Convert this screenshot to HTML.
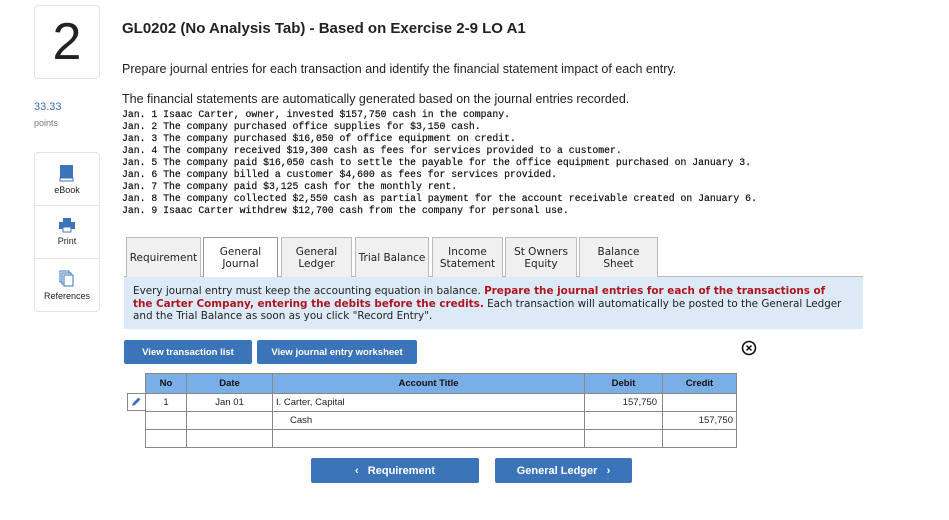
<!DOCTYPE html>
<html><head><meta charset="utf-8"><style>
*{box-sizing:border-box;margin:0;padding:0}
body{width:949px;height:520px;background:#fff;position:relative;font-family:"Liberation Sans",sans-serif;color:#222;overflow:hidden}
.a{position:absolute}
.num{left:34px;top:5px;width:66px;height:74px;border:1px solid #e3e3e3;border-radius:4px;text-align:center;font-size:52px;line-height:72px;color:#222}
.mono{font-family:"Liberation Mono",monospace;font-size:9.8px;line-height:12px;white-space:pre;color:#111;left:122px;top:109px;-webkit-text-stroke:0.2px #111}
.side{left:34px;top:152px;width:66px;height:160px;border:1px solid #e3e3e3;border-radius:4px}
.side div{height:53px;border-bottom:1px solid #e3e3e3;text-align:center;font-size:9px;padding-top:11px;position:relative}
.side div:last-child{border-bottom:none}
.tab{top:237px;height:40px;border:1px solid #bbb;border-bottom:none;background:#f0f0f0;font-family:"DejaVu Sans",sans-serif;font-size:10.5px;text-align:center;display:flex;align-items:center;justify-content:center;line-height:12px;color:#222}
.info{left:124px;top:277px;width:739px;height:52px;background:#dceaf7;font-family:"DejaVu Sans",sans-serif;font-size:10.4px;line-height:12.5px;padding:8px 6px 8px 9px}
.btn{background:#3b74b8;color:#fff;font-weight:bold;font-size:10.5px;display:flex;align-items:center;justify-content:center;border-radius:2px}
table{border-collapse:collapse;font-size:9.5px;position:absolute;left:145px;top:373px}
td,th{border:1px solid #888;height:18px}
th{background:#7aaee6;height:20px;font-weight:bold;color:#111}
</style></head><body>
<div class="a num">2</div>
<div class="a" style="left:122px;top:20px;font-size:15px;font-weight:bold">GL0202 (No Analysis Tab) - Based on Exercise 2-9 LO A1</div>
<div class="a" style="left:122px;top:62px;font-size:12.5px">Prepare journal entries for each transaction and identify the financial statement impact of each entry.</div>
<div class="a" style="left:122px;top:92px;font-size:12.5px">The financial statements are automatically generated based on the journal entries recorded.</div>
<div class="a mono">Jan. 1 Isaac Carter, owner, invested $157,750 cash in the company.
Jan. 2 The company purchased office supplies for $3,150 cash.
Jan. 3 The company purchased $16,050 of office equipment on credit.
Jan. 4 The company received $19,300 cash as fees for services provided to a customer.
Jan. 5 The company paid $16,050 cash to settle the payable for the office equipment purchased on January 3.
Jan. 6 The company billed a customer $4,600 as fees for services provided.
Jan. 7 The company paid $3,125 cash for the monthly rent.
Jan. 8 The company collected $2,550 cash as partial payment for the account receivable created on January 6.
Jan. 9 Isaac Carter withdrew $12,700 cash from the company for personal use.</div>
<div class="a" style="left:34px;top:101px;font-size:11px;color:#3b6fb0">33.33</div>
<div class="a" style="left:34px;top:118px;font-size:9px;color:#777">points</div>
<div class="a side">
<div><svg width="16" height="18" style="display:block;margin:0 auto 3px"><rect x="1" y="1" width="13" height="14" fill="#3b74b8"/><rect x="1" y="14" width="13" height="3" fill="#fff" stroke="#3b74b8"/></svg>eBook</div>
<div><svg width="18" height="16" style="display:block;margin:0 auto 3px"><rect x="5" y="1" width="8" height="4" fill="#3b74b8"/><rect x="1" y="5" width="16" height="7" fill="#3b74b8"/><rect x="5" y="10" width="8" height="5" fill="#fff" stroke="#3b74b8"/></svg>Print</div>
<div><svg width="16" height="18" style="display:block;margin:0 auto 3px"><rect x="1" y="1" width="9" height="11" fill="#fff" stroke="#3b74b8"/><rect x="3" y="3" width="9" height="11" fill="#fff" stroke="#3b74b8"/><rect x="5" y="5" width="9" height="11" fill="#fff" stroke="#3b74b8"/></svg>References</div>
</div>
<div class="a" style="left:124px;top:276px;width:739px;height:1px;background:#bbb"></div>
<div class="a tab" style="left:126px;width:75px">Requirement</div>
<div class="a tab" style="left:203px;width:75px;background:#fff;height:41px;border-color:#999">General<br>Journal</div>
<div class="a tab" style="left:281px;width:71px">General<br>Ledger</div>
<div class="a tab" style="left:355px;width:74px">Trial Balance</div>
<div class="a tab" style="left:432px;width:71px">Income<br>Statement</div>
<div class="a tab" style="left:505px;width:72px">St Owners<br>Equity</div>
<div class="a tab" style="left:579px;width:79px">Balance<br>Sheet</div>
<div class="a info">Every journal entry must keep the accounting equation in balance. <b style="color:#b0141c">Prepare the journal entries for each of the transactions of<br>the Carter Company, entering the debits before the credits.</b> Each transaction will automatically be posted to the General Ledger<br>and the Trial Balance as soon as you click "Record Entry".</div>
<div class="a btn" style="left:124px;top:340px;width:128px;height:24px;font-size:9.5px">View transaction list</div>
<div class="a btn" style="left:257px;top:340px;width:160px;height:24px;font-size:9.5px">View journal entry worksheet</div>
<svg class="a" style="left:741px;top:340px" width="16" height="16"><circle cx="8" cy="8" r="6.5" fill="none" stroke="#111" stroke-width="1.6"/><path d="M5.5 5.5L10.5 10.5M10.5 5.5L5.5 10.5" stroke="#111" stroke-width="1.5"/></svg>
<div class="a" style="left:127px;top:393px;width:19px;height:18px;border:1px solid #888;border-right:none"></div>
<svg class="a" style="left:130px;top:396px" width="12" height="12"><path d="M2 10L3 7L8.5 1.5L10.5 3.5L5 9Z" fill="#3b74b8"/></svg>
<table>
<tr><th style="width:41px">No</th><th style="width:86px">Date</th><th style="width:312px">Account Title</th><th style="width:78px">Debit</th><th style="width:74px">Credit</th></tr>
<tr><td style="text-align:center">1</td><td style="text-align:center">Jan 01</td><td style="padding-left:3px">I. Carter, Capital</td><td style="text-align:right;padding-right:5px">157,750</td><td></td></tr>
<tr><td></td><td></td><td style="padding-left:17px">Cash</td><td></td><td style="text-align:right;padding-right:3px">157,750</td></tr>
<tr><td></td><td></td><td></td><td></td><td></td></tr>
</table>
<div class="a btn" style="left:311px;top:458px;width:168px;height:25px;font-size:11px">‹&nbsp;&nbsp;&nbsp;Requirement</div>
<div class="a btn" style="left:495px;top:458px;width:137px;height:25px;font-size:11px">General Ledger&nbsp;&nbsp;&nbsp;›</div>
</body></html>
